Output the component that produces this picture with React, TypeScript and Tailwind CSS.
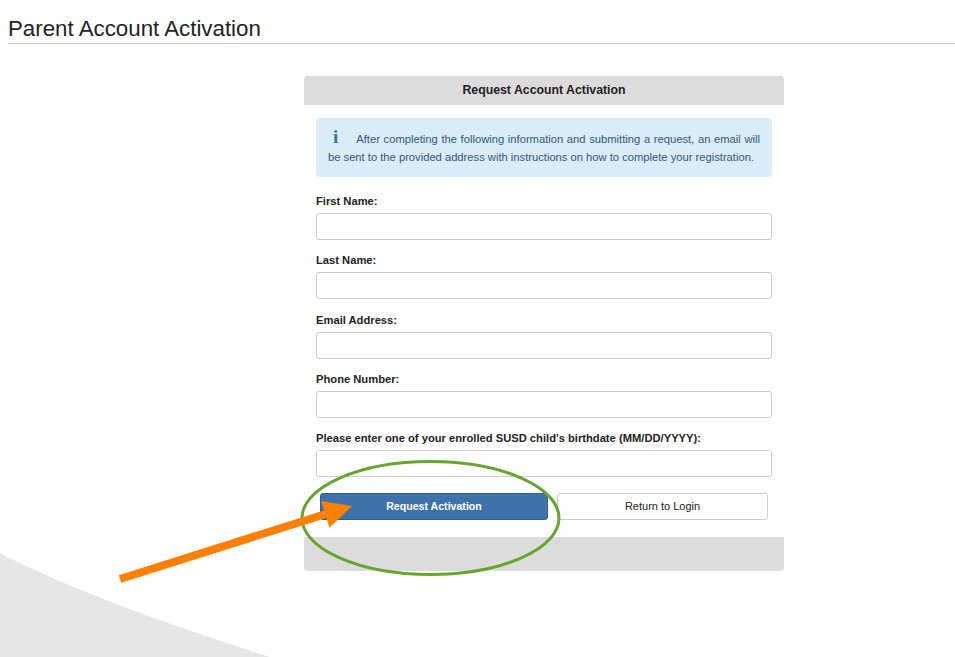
import React from 'react';

const fields = [
  'First Name:',
  'Last Name:',
  'Email Address:',
  'Phone Number:',
  "Please enter one of your enrolled SUSD child's birthdate (MM/DD/YYYY):",
];

export default function App() {
  return (
    <div className="relative h-[657px] w-full overflow-hidden bg-white font-['Liberation_Sans',Arial,sans-serif] text-[#222]">
      {/* Background swoosh */}
      <svg className="absolute left-0 top-0 h-[657px] w-[955px]" viewBox="0 0 955 657">
        <path d="M0 553 Q 90 600 270 657 L 0 657 Z" fill="#e6e6e6" />
      </svg>

      <div className="relative">
        {/* Page title */}
        <div className="ml-2 border-b border-[#cccccc] pt-[16px] pb-[1px]">
          <h1 className="text-[22.3px] leading-[26px] font-normal text-[#222]">Parent Account Activation</h1>
        </div>

        {/* Card */}
        <div className="ml-[304px] mt-8 w-[480px]">
          <div className="flex h-[29px] items-center justify-center rounded-t-[4px] bg-[#dcdcdc] text-[12.3px] font-bold text-[#222]">
            Request Account Activation
          </div>

          <div className="bg-white px-3 pt-[13px] pb-[17px]">
            <div className="h-[59px] overflow-hidden rounded-[4px] bg-[#d9ecf7] px-3 pt-[12px] text-justify text-[11.2px] leading-[18px] text-[#33597a]">
              <span className="mr-[18px] ml-[5px] font-['Liberation_Serif',serif] text-[19px] leading-[0px] font-bold text-[#3b73a6]">
                i
              </span>
              After completing the following information and submitting a request, an email will be sent to the provided address with instructions on how to complete your registration.
            </div>

            <div className="mt-[17px] flex flex-col gap-[13.25px]">
              {fields.map((label) => (
                <div key={label} className="flex flex-col">
                  <label className="mb-[4px] text-[11.2px] leading-[15px] font-bold text-[#222]">{label}</label>
                  <input className="h-[27px] w-full rounded-[3px] border border-[#cccccc] bg-white px-2 text-[12px] outline-none" />
                </div>
              ))}
            </div>

            <div className="mt-4 flex gap-[9px] px-1">
              <button className="h-[27px] w-[228px] rounded-[3px] border border-[#2f5f93] bg-[#3f72ab] text-[10.6px] font-bold text-white">
                Request Activation
              </button>
              <button className="h-[27px] w-[211px] rounded-[3px] border border-[#cccccc] bg-white text-[11px] text-[#222]">
                Return to Login
              </button>
            </div>
          </div>

          <div className="h-[34px] rounded-b-[4px] bg-[#dcdcdc]" />
        </div>
      </div>

      {/* Annotations */}
      <svg className="pointer-events-none absolute left-0 top-0 h-[657px] w-[955px]" viewBox="0 0 955 657">
        <ellipse cx="430.5" cy="518" rx="128.5" ry="56.5" fill="none" stroke="#67a52c" strokeWidth="3" />
        <line x1="120" y1="579" x2="332" y2="512" stroke="#ff8000" strokeWidth="8" />
        <polygon points="352,506 329.5,527.8 321.1,501" fill="#ff8000" />
      </svg>
    </div>
  );
}
